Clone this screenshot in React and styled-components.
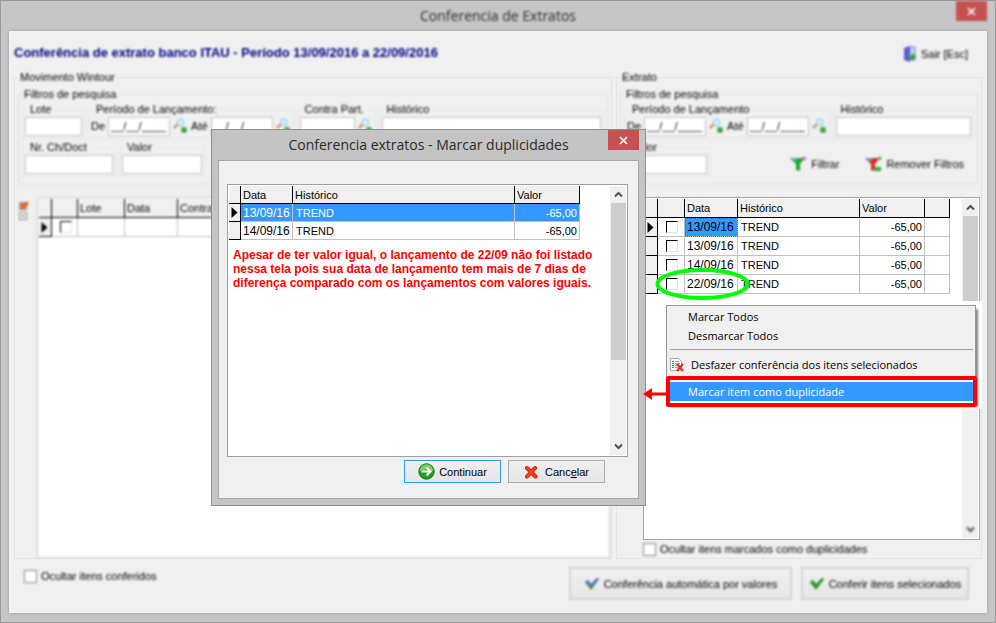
import React from 'react'
import styled, { createGlobalStyle, css } from 'styled-components'

const GlobalStyle = createGlobalStyle`
  *, *::before, *::after {
    box-sizing: border-box;
  }

  body {
    margin: 0;
    font-family: "Liberation Sans", Arial, sans-serif;
    font-size: 11px;
    line-height: 14px;
    color: #000;
  }

  input, button {
    font: inherit;
    color: inherit;
  }
`

// Everything behind the dialog is out of focus
const soft = css`
  filter: blur(1px);
`

const Window = styled.div`
  position: relative;
  display: flex;
  flex-direction: column;
  min-height: 100vh;
  padding: 0 8px 9px;
  border: 1px solid #999;
  background: #c6c6c6;
`

const TitleBar = styled.header`
  position: relative;
  display: flex;
  align-items: center;
  justify-content: center;
  height: 30px;
  font-family: "Open Sans", "Noto Sans", sans-serif;
  font-size: 14px;
  color: #2b2b2b;
`

const Title = styled.h1`
  margin: 0;
  font-size: 14px;
  font-weight: 400;
  line-height: 20px;
  ${({ $soft }) => $soft && soft}
`

const CloseButton = styled.button`
  position: absolute;
  top: 0;
  right: 0;
  display: flex;
  align-items: center;
  justify-content: center;
  width: 31px;
  height: 20px;
  padding: 0;
  border: 0;
  background: #c75050;
  color: #fff;
  ${({ $soft }) => $soft && soft}
`

const Client = styled.main`
  flex: 1;
  display: flex;
  flex-direction: column;
  padding: 0 5px;
  background: #f0f0f0;
  box-shadow: 0 0 3px #999;
`

const Heading = styled.div`
  display: flex;
  align-items: center;
  justify-content: space-between;
  height: 39px;
  padding: 6px 14px 0 0;
  ${soft}
`

const AccountTitle = styled.h2`
  margin: 0 0 2px;
  font-size: 13px;
  color: #000080;
`

const FlatButton = styled.button`
  display: flex;
  align-items: center;
  gap: 4px;
  padding: 0;
  border: 0;
  background: none;
`

const Columns = styled.div`
  flex: 1;
  display: grid;
  grid-template-columns: 598fr 366fr;
  gap: 4px;
`

const Group = styled.fieldset`
  display: flex;
  flex-direction: column;
  min-width: 0;
  margin: 0;
  padding: 3px 1px 0 3px;
  border: 1px solid #e4e4e4;
`

const GroupLegend = styled.legend`
  padding: 0 2px;
  ${soft}
`

const Filters = styled.fieldset`
  min-width: 0;
  margin: 0 2px 13px 0;
  padding: 1px 3px 5px;
  border: 1px solid #e2e2e2;
  ${soft}
`

const FilterRow = styled.div`
  display: flex;
  gap: 3px;
  min-height: 38px;
`

const Field = styled.fieldset`
  display: flex;
  align-items: center;
  gap: 3px;
  min-width: 0;
  height: 37px;
  margin: 0;
  padding: 1px 2px 3px;
  border: 1px solid #e6e6e6;
  flex: ${({ $grow }) => ($grow ? 1 : 'none')};

  legend {
    padding: 0 4px;
    margin-left: 1px;
    white-space: nowrap;
  }
`

const TextInput = styled.input`
  flex: ${({ $width }) => ($width ? 'none' : 1)};
  width: ${({ $width }) => ($width ? `${$width}px` : '100%')};
  min-width: 0;
  height: 19px;
  padding: 0 2px;
  border: 1px solid #c4c4c4;
  background: #fff;
`

const DateLabel = styled.label`
  flex: none;
`

const FilterActions = styled.div`
  flex: 1;
  display: flex;
  align-items: center;
  justify-content: flex-end;
  gap: 26px;
  padding: 10px 10px 0 0;
`

const GridRow = styled.div`
  flex: 1;
  display: flex;
  gap: 7px;
`

const SideTools = styled.div`
  width: ${({ $wide }) => ($wide ? 16 : 12)}px;
  padding-top: 4px;
  ${soft}
`

const GridPanel = styled.div`
  flex: 1;
  display: flex;
  justify-content: space-between;
  min-width: 0;
  padding: 1px;
  border: 1px solid ${({ $soft }) => ($soft ? '#ccc' : '#a8a8a8')};
  background: #fff;
  ${({ $soft }) => $soft && soft}
`

const Grid = styled.table`
  align-self: flex-start;
  table-layout: fixed;
  width: ${({ $width }) => $width}px;
  border-collapse: separate;
  border-spacing: 0;

  th, td {
    height: ${({ $row }) => $row}px;
    padding: 0 2px 0 3px;
    border-right: 1px solid #c0c0c0;
    border-bottom: 1px solid #c0c0c0;
    text-align: left;
    font-weight: 400;
    line-height: 14px;
    white-space: nowrap;
    overflow: hidden;
  }

  th {
    height: ${({ $head }) => $head}px;
    padding-left: 2px;
    background: #f0f0f0;
    border-color: #000;
  }

  th:first-child {
    padding: 0 0 0 2px;
  }
`

const DateCell = styled.td`
  && {
    padding: 0 0 0 2px;
    font-size: 12px;
    background: ${({ $focused }) => ($focused ? '#3399ff' : 'transparent')};
    outline: ${({ $focused }) => ($focused ? '1px dotted #b5432e' : 'none')};
    outline-offset: -1px;
  }
`

const AmountCell = styled.td`
  && {
    text-align: right;
  }
`

const CheckCell = styled.td`
  && {
    padding: 0 0 0 8px;
  }
`

const Row = styled.tr`
  background: ${({ $selected }) => ($selected ? '#3399ff' : '#fff')};
  color: ${({ $selected }) => ($selected ? '#fff' : '#000')};
`

const GridCheck = styled.input.attrs({ type: 'checkbox' })`
  appearance: none;
  display: block;
  width: 12px;
  height: 12px;
  margin: 0;
  border: 1px solid;
  border-color: #000 #e3e3e3 #e3e3e3 #000;
  background: #fff;
`

const ScrollBar = styled.div`
  display: flex;
  flex-direction: column;
  align-items: center;
  justify-content: space-between;
  width: 16px;
  background: #f0f0f0;
`

const ScrollTop = styled.div`
  display: flex;
  flex-direction: column;
  align-items: center;
  width: 100%;
`

const ScrollArrow = styled.button`
  display: flex;
  align-items: center;
  justify-content: center;
  width: 16px;
  height: 17px;
  padding: 0;
  border: 0;
  background: none;
  color: #505050;
  ${({ $soft }) => $soft && soft}
`

const Thumb = styled.div`
  width: 15px;
  height: ${({ $length }) => $length}px;
  background: #cdcdcd;
`

const CheckLabel = styled.label`
  display: flex;
  align-items: center;
  gap: 4px;
  height: 18px;
  margin-left: ${({ $indent }) => ($indent ? 23 : 0)}px;
  ${soft}

  input {
    appearance: none;
    width: 13px;
    height: 13px;
    margin: 0;
    border: 1px solid #8a8a8a;
    background: #fff;
  }
`

const Footer = styled.footer`
  display: flex;
  justify-content: space-between;
  height: 54px;
  padding: 8px 13px 0 10px;
`

const FooterButtons = styled.div`
  display: flex;
  gap: 9px;
  ${soft}
`

const FooterButton = styled.button`
  display: flex;
  align-items: center;
  justify-content: center;
  gap: 4px;
  width: ${({ $wide }) => ($wide ? 223 : 168)}px;
  height: 33px;
  padding: 0;
  border: 2px solid #d4d4d4;
  background: linear-gradient(#f0f0f0, #e6e6e6);
`

const Dialog = styled.section`
  position: absolute;
  top: 128px;
  left: 210px;
  width: 435px;
  padding: 0 6px 6px;
  border: 1px solid #8f8f8f;
  background: #c4c4c4;
`

const DialogBody = styled.div`
  display: flex;
  flex-direction: column;
  padding: 23px 10px 15px 8px;
  border: 1px solid #a6a6a6;
  background: #f0f0f0;
`

const DialogPanel = styled.div`
  display: flex;
  justify-content: space-between;
  height: 273px;
  padding: 1px;
  border: 1px solid #a0a0a0;
  background: #fff;
`

const Note = styled.p`
  margin: 8px 0 0 4px;
  font-size: 12px;
  font-weight: 700;
  color: #f00;
  white-space: nowrap;
`

const DialogButtons = styled.div`
  display: flex;
  justify-content: flex-end;
  gap: 7px;
  padding: 3px 23px 0 0;
`

const DialogButton = styled.button`
  display: flex;
  align-items: center;
  justify-content: center;
  gap: 4px;
  width: 97px;
  height: 23px;
  padding: 0;
  border: 1px solid;
  border-color: ${({ $primary }) => ($primary ? '#3399ff' : '#acacac')};
  background: linear-gradient(#f0f0f0, #e5e5e5);
`

const MenuLayer = styled.div`
  position: absolute;
  top: 300px;
  left: 645px;
  width: 336px;
  height: 108px;
  padding: 4px 6px 0 20px;
  background: #fff;
`

const Menu = styled.div`
  display: flex;
  flex-direction: column;
  height: 100px;
  padding-top: 1px;
  border: 1px solid #979797;
  background: #f0f0f0;
  box-shadow: 3px 3px 2px -1px #888;
  font-family: "Open Sans", "Noto Sans", sans-serif;
`

const MenuItem = styled.button`
  display: flex;
  align-items: center;
  gap: 6px;
  flex: none;
  height: 19px;
  margin: 0 3px;
  padding: 0 0 0 ${({ $icon }) => ($icon ? 0 : 18)}px;
  border: 0;
  background: ${({ $active }) => ($active ? '#3399ff' : 'none')};
  color: ${({ $active }) => ($active ? '#fff' : '#000')};
  text-align: left;
  white-space: nowrap;
`

const Separator = styled.hr`
  width: 303px;
  margin: 4px 3px 5px;
  border: 0;
  border-top: 1px solid #a0a0a0;
`

const Highlight = styled.div`
  display: flex;
  flex-direction: column;
  margin: 2px -2px 0 -1px;
  padding: 2px 0;
  border: 4px solid #f00;
  border-radius: 2px;
  background: #fff;

  ${MenuItem} {
    margin: 0;
    padding-left: 18px;
  }
`

const Arrow = styled.svg`
  position: absolute;
  top: 386px;
  left: 641px;
`

const Ellipse = styled.svg`
  position: absolute;
  top: 266px;
  left: 654px;
`

const CloseIcon = () => (
  <svg width="9" height="9" viewBox="0 0 9 9" aria-hidden="true">
    <path d="M1 1l7 7M8 1L1 8" stroke="currentColor" strokeWidth="1.6" />
  </svg>
)

const Chevron = ({ down }) => (
  <svg width="9" height="7" viewBox="0 0 9 7" aria-hidden="true">
    <path d={down ? 'M1 1.5l3.5 3.5L8 1.5' : 'M1 5.5L4.5 2 8 5.5'} fill="none" stroke="currentColor" strokeWidth="2" />
  </svg>
)

const Pointer = () => (
  <svg width="7" height="11" viewBox="0 0 7 11" display="block" aria-hidden="true">
    <path d="M0.500 0v11L6.500 5.500z" />
  </svg>
)

const SearchIcon = () => (
  <svg width="15" height="16" viewBox="0 0 15 16" aria-hidden="true">
    <path d="M1 10l4-4" stroke="#d9822b" strokeWidth="2" />
    <circle cx="7.500" cy="4.500" r="3.500" fill="#d5effc" stroke="#8fc0e4" />
    <circle cx="11" cy="12" r="3" fill="#3fa63f" />
  </svg>
)

const ExitIcon = () => (
  <svg width="14" height="16" viewBox="0 0 14 16" aria-hidden="true">
    <path d="M1 2l6-2v16l-6-2z" fill="#5c5cd0" />
    <path d="M7 1h5v13H7z" fill="#c6d4f4" stroke="#7a7ad8" />
    <path d="M6 10h3V7l4 4-4 4v-2H6z" fill="#2f9e2f" />
  </svg>
)

const FunnelIcon = ({ remove }) => (
  <svg width="17" height="16" viewBox="0 0 17 16" aria-hidden="true">
    <path d="M0 2h15l-5 6v7l-4-1V8z" fill={remove ? '#dc2828' : '#1faa1f'} />
    <path d="M1 2h7l-2 3H3z" fill="#5aa0d8" />
    <path d={remove ? 'M11 3l5-3v4z' : 'M12 1h4v3h-3z'} fill={remove ? '#36b336' : '#cf6ad6'} />
    {remove && <path d="M9 11h7v4H9z" fill="#36a836" />}
  </svg>
)

const CheckIcon = ({ top = '#2f9a2f' }) => (
  <svg width="16" height="15" viewBox="0 0 16 15" aria-hidden="true">
    <path d="M1 6l3-2 3 4 6-6 2 1-8 11z" fill="#2f9a2f" />
    <path d="M1 6l3-2 3 4 6-6 2 1-4 5-4 2-4-1z" fill={top} />
  </svg>
)

const ToolsIcon = () => (
  <svg width="11" height="20" viewBox="0 0 11 20" aria-hidden="true">
    <path d="M1 1h8v8H1z" fill="#b98a80" />
    <path d="M3 4l7-4v4L5 7z" fill="#f2591c" />
    <rect x="1.500" y="11.500" width="7" height="7" fill="#fff" stroke="#888" />
    <path d="M3 15h4M5 13v4" stroke="#888" />
  </svg>
)

const GoIcon = () => (
  <svg width="17" height="17" viewBox="0 0 17 17" aria-hidden="true">
    <circle cx="8.500" cy="8.500" r="7.700" fill="#1fa01f" stroke="#1b6e1b" />
    <path d="M1.800 8a6.700 6.700 0 0 1 13.400 0q-7-3-13.400 0z" fill="#7fce6a" />
    <path d="M3.500 8.500h8M8.500 4.500l4 4-4 4" fill="none" stroke="#fff" strokeWidth="2.200" />
  </svg>
)

const CancelIcon = () => (
  <svg width="14" height="14" viewBox="0 0 14 14" aria-hidden="true">
    <path d="M3 3l8.500 8.500M11 3l-8 8.500" stroke="#a81410" strokeWidth="4" strokeLinecap="round" />
    <path d="M3 3l8.500 8.500M11 3l-8 8.500" stroke="#f8401c" strokeWidth="2.600" strokeLinecap="round" />
  </svg>
)

const UndoListIcon = () => (
  <svg width="15" height="16" viewBox="0 0 15 16" aria-hidden="true">
    <path d="M.500 1.500h8l3 3v9H.500z" fill="#fff" stroke="#aaa" />
    <path d="M2 4.500h2M2 6.500h2M2 8.500h2M2 10.500h2" stroke="#2d9a4a" />
    <path d="M5 4.500h4M5 6.500h5M5 8.500h5M5 10.500h3" stroke="#999" />
    <path d="M7 7l6 7M13 7l-6 7" stroke="#e02b1d" strokeWidth="2" />
  </svg>
)

const TextField = ({ id, label, width, icon }) => (
  <Field $grow={!width}>
    <legend><label htmlFor={id}>{label}</label></legend>
    <TextInput id={id} $width={width} />
    {icon && <SearchIcon />}
  </Field>
)

const PeriodField = ({ id, label }) => (
  <Field>
    <legend>{label}</legend>
    <DateLabel htmlFor={`${id}-from`}>De</DateLabel>
    <TextInput id={`${id}-from`} $width={62} defaultValue="__/__/____" />
    <SearchIcon />
    <DateLabel htmlFor={`${id}-to`}>Até</DateLabel>
    <TextInput id={`${id}-to`} $width={62} defaultValue="__/__/____" />
    <SearchIcon />
  </Field>
)

const Columned = ({ widths }) => (
  <colgroup>
    {widths.map((width, i) => <col key={i} width={width} />)}
  </colgroup>
)

const Scroller = ({ length, softEnd }) => (
  <ScrollBar>
    <ScrollTop>
      <ScrollArrow aria-label="Subir"><Chevron /></ScrollArrow>
      <Thumb $length={length} />
    </ScrollTop>
    <ScrollArrow aria-label="Descer" $soft={softEnd}><Chevron down /></ScrollArrow>
  </ScrollBar>
)

const entries = [
  { date: '13/09/16', text: 'TREND', amount: '-65,00' },
  { date: '13/09/16', text: 'TREND', amount: '-65,00' },
  { date: '14/09/16', text: 'TREND', amount: '-65,00' },
  { date: '22/09/16', text: 'TREND', amount: '-65,00' },
]

const duplicates = [entries[0], entries[2]]

const Indicator = styled.td`
  && {
    padding: 0 0 0 2px;
    background: #f0f0f0;
    border-color: #000;
  }
`

const MovementGrid = () => (
  <GridPanel $soft>
    <Grid $width={340} $head={19} $row={19}>
      <Columned widths={[13, 26, 47, 53, 201]} />
      <thead>
        <tr><th /><th /><th>Lote</th><th>Data</th><th>Contra</th></tr>
      </thead>
      <tbody>
        <Row>
          <Indicator><Pointer /></Indicator>
          <CheckCell><GridCheck aria-label="Marcar item" /></CheckCell>
          <td /><td /><td />
        </Row>
      </tbody>
    </Grid>
  </GridPanel>
)

const StatementGrid = () => (
  <GridPanel>
    <Grid $width={305} $head={19} $row={19}>
      <Columned widths={[13, 27, 53, 122, 65, 25]} />
      <thead>
        <tr><th /><th /><th>Data</th><th>Histórico</th><th>Valor</th><th /></tr>
      </thead>
      <tbody>
        {entries.map((entry, i) => (
          <Row key={i}>
            <Indicator>{i === 0 && <Pointer />}</Indicator>
            <CheckCell><GridCheck aria-label={`Marcar ${entry.date}`} /></CheckCell>
            <DateCell $focused={i === 0}>{entry.date}</DateCell>
            <td>{entry.text}</td>
            <AmountCell>{entry.amount}</AmountCell>
            <td />
          </Row>
        ))}
      </tbody>
    </Grid>
    <Scroller length={85} softEnd />
  </GridPanel>
)

const DuplicatesDialog = () => (
  <Dialog role="dialog" aria-labelledby="dialog-title">
    <TitleBar>
      <Title as="h2" id="dialog-title">Conferencia extratos - Marcar duplicidades</Title>
      <CloseButton aria-label="Fechar"><CloseIcon /></CloseButton>
    </TitleBar>
    <DialogBody>
      <DialogPanel>
        <div>
          <Grid $width={351} $head={18} $row={18}>
            <Columned widths={[12, 52, 222, 65]} />
            <thead>
              <tr><th /><th>Data</th><th>Histórico</th><th>Valor</th></tr>
            </thead>
            <tbody>
              {duplicates.map((entry, i) => (
                <Row key={entry.date} $selected={i === 0}>
                  <Indicator>{i === 0 && <Pointer />}</Indicator>
                  <DateCell>{entry.date}</DateCell>
                  <td>{entry.text}</td>
                  <AmountCell>{entry.amount}</AmountCell>
                </Row>
              ))}
            </tbody>
          </Grid>
          <Note>
            Apesar de ter valor igual, o lançamento de 22/09 não foi listado<br />
            nessa tela pois sua data de lançamento tem mais de 7 dias de<br />
            diferença comparado com os lançamentos com valores iguais.
          </Note>
        </div>
        <Scroller length={157} />
      </DialogPanel>
      <DialogButtons>
        <DialogButton $primary><GoIcon />Continuar</DialogButton>
        <DialogButton><CancelIcon /><span>&nbsp;Canc<u>e</u>lar</span></DialogButton>
      </DialogButtons>
    </DialogBody>
  </Dialog>
)

const ContextMenu = () => (
  <MenuLayer>
    <Menu>
      <MenuItem>Marcar Todos</MenuItem>
      <MenuItem>Desmarcar Todos</MenuItem>
      <Separator />
      <MenuItem $icon><UndoListIcon />Desfazer conferência dos itens selecionados</MenuItem>
      <Highlight>
        <MenuItem $active>Marcar item como duplicidade</MenuItem>
      </Highlight>
    </Menu>
  </MenuLayer>
)

const App = () => {
  return (
    <>
      <GlobalStyle />
      <Window>
        <TitleBar>
          <Title $soft>Conferencia de Extratos</Title>
          <CloseButton $soft aria-label="Fechar"><CloseIcon /></CloseButton>
        </TitleBar>
        <Client>
          <Heading>
            <AccountTitle>Conferência de extrato banco ITAU - Período 13/09/2016 a 22/09/2016</AccountTitle>
            <FlatButton><ExitIcon />Sair [Esc]</FlatButton>
          </Heading>
          <Columns>
            <Group>
              <GroupLegend>Movimento Wintour</GroupLegend>
              <Filters>
                <legend>Filtros de pesquisa</legend>
                <FilterRow>
                  <TextField id="lote" label="Lote" width={57} />
                  <PeriodField id="mov" label="Período de Lançamento:" />
                  <TextField id="contra" label="Contra Part." width={55} icon />
                  <TextField id="mov-hist" label="Histórico" />
                </FilterRow>
                <FilterRow>
                  <TextField id="doc" label="Nr. Ch/Doct" width={88} />
                  <TextField id="mov-valor" label="Valor" width={80} />
                </FilterRow>
              </Filters>
              <GridRow>
                <SideTools><ToolsIcon /></SideTools>
                <MovementGrid />
              </GridRow>
            </Group>
            <Group>
              <GroupLegend>Extrato</GroupLegend>
              <Filters>
                <legend>Filtros de pesquisa</legend>
                <FilterRow>
                  <PeriodField id="ext" label="Período de Lançamento" />
                  <TextField id="ext-hist" label="Histórico" />
                </FilterRow>
                <FilterRow>
                  <TextField id="ext-valor" label="Valor" width={80} />
                  <FilterActions>
                    <FlatButton><FunnelIcon />Filtrar</FlatButton>
                    <FlatButton><FunnelIcon remove />Remover Filtros</FlatButton>
                  </FilterActions>
                </FilterRow>
              </Filters>
              <GridRow>
                <SideTools $wide />
                <StatementGrid />
              </GridRow>
              <CheckLabel $indent>
                <input type="checkbox" />Ocultar itens marcados como duplicidades
              </CheckLabel>
            </Group>
          </Columns>
          <Footer>
            <CheckLabel><input type="checkbox" />Ocultar itens conferidos</CheckLabel>
            <FooterButtons>
              <FooterButton $wide><CheckIcon top="#6a6ad8" />Conferência automática por valores</FooterButton>
              <FooterButton><CheckIcon />Conferir itens selecionados</FooterButton>
            </FooterButtons>
          </Footer>
        </Client>
        <DuplicatesDialog />
        <ContextMenu />
        <Ellipse width="98" height="36" viewBox="0 0 98 36" aria-hidden="true">
          <ellipse cx="47.500" cy="17" rx="45" ry="14" fill="none" stroke="#00ff00" strokeWidth="4" />
        </Ellipse>
        <Arrow width="26" height="14" viewBox="0 0 26 14" aria-hidden="true">
          <path d="M1 7l9-6v4.500h15v3H10V13z" fill="#f00" />
        </Arrow>
      </Window>
    </>
  )
}

export default App
